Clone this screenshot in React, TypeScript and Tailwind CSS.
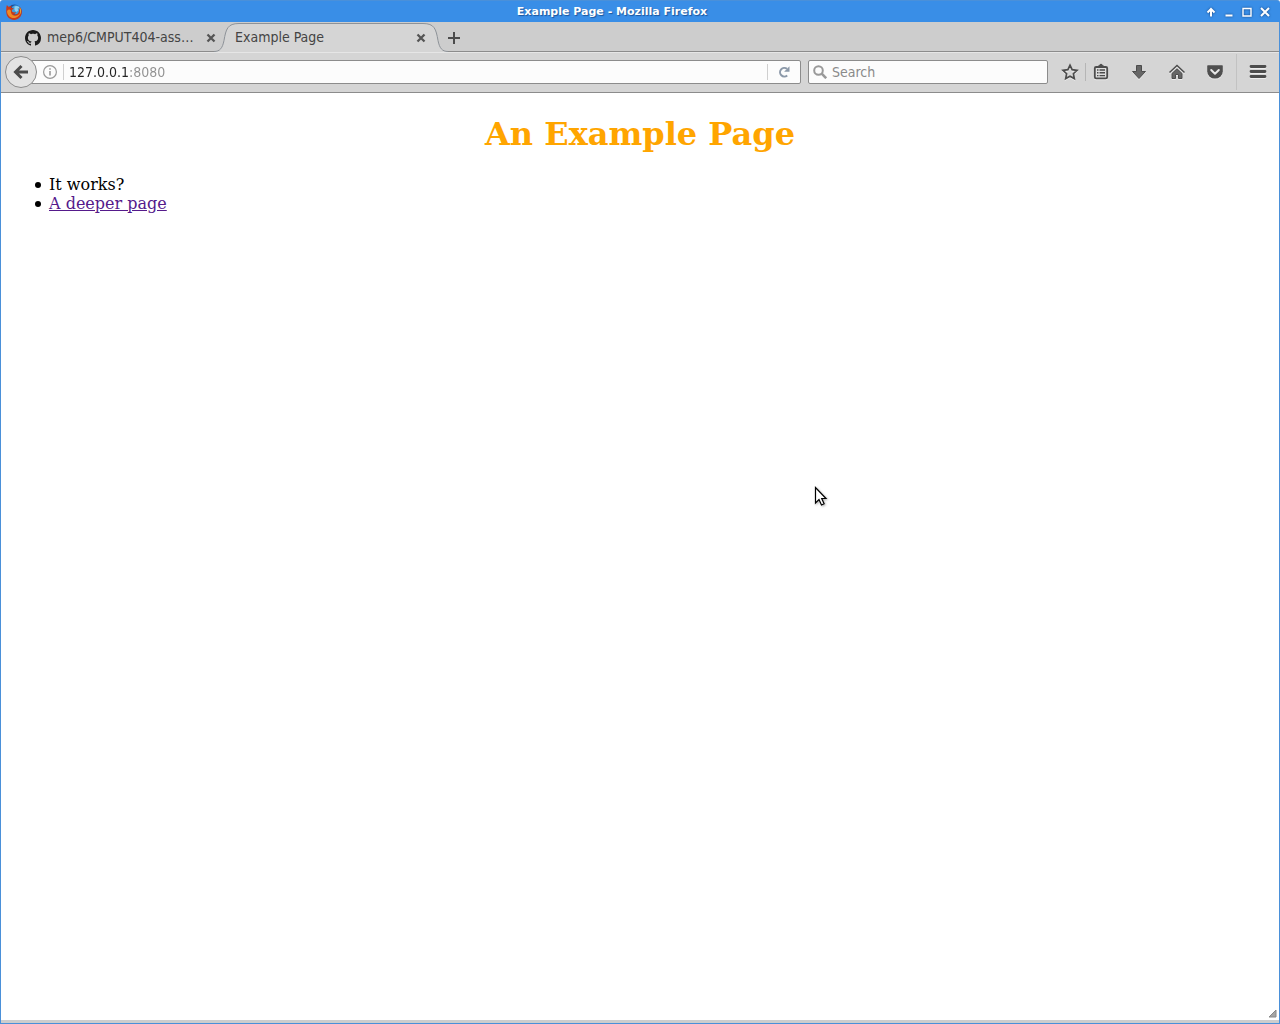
import { useState, type ReactNode } from "react";

function FirefoxLogo() {
  return (
    <svg width="16" height="16" viewBox="0 0 16 16" aria-hidden="true">
      <circle cx="8.4" cy="7.8" r="7.2" fill="#1b4e9b" />
      <circle cx="9.8" cy="5.8" r="4.600" fill="#3f9fdc" />
      <path d="M8.500 2.400c1.600-1 4.200-.600 5.200 1.600-.8-.2-1.600 0-2.200.6l.8 2-2.200 1.400L8.500 6z" fill="#8fd0f0" />
      <path
        d="M.9 1C1.600 2 2.300 2.600 3.200 2.900 4 2.200 5 1.800 6.200 1.700 5.400 2.400 5 3 4.900 3.800c1 .2 1.900.1 2.700.3-.1.900-.9 1.400-1.700 1.800 0 .8 0 1.300.500 1.900 1 1 2.500.500 3.600.400-.400 1.300-1.700 1.800-2.900 1.800 1.700 1.200 4.200.600 5.200-1.200.700-1.400 1-3 .600-4.600.500.500.800 1.100 1 1.700.1-1.200-.1-2.400-.7-3.300 1.600 1.200 2.600 3 2.600 5.100 0 4.700-3.400 8.200-7.700 8.200C3.600 15.900.3 12.600.3 8.300.2 5.800.1 3.400.9 1z"
        fill="#c93a1a"
      />
      <path d="M1 7.500c.4 4 3.300 6.700 6.700 6.600 3.700-.1 6.200-2.500 6.800-5.800-1.200 2.600-3.300 3.700-5.600 3.400C6.200 11.600 4.600 9.500 4.800 6.500 3.600 4.800 1.500 5.200 1 7.500z" fill="#f08a24" />
      <path d="M13.600 3.200c1.500 1.900 1.700 4.900.4 7.200.2-2.300.3-5-.4-7.200z" fill="#f7d33c" />
    </svg>
  );
}

function GithubMark() {
  return (
    <svg width="16" height="16" viewBox="0 0 16 16" fill="#1b1b1b" aria-hidden="true">
      <path d="M8 0C3.580 0 0 3.580 0 8c0 3.540 2.290 6.530 5.470 7.590.4.070.55-.17.55-.38 0-.19-.01-.82-.01-1.490-2.010.37-2.530-.49-2.690-.94-.09-.23-.48-.94-.82-1.130-.28-.15-.68-.52-.01-.53.63-.01 1.080.58 1.230.82.72 1.210 1.870.87 2.330.66.07-.52.28-.87.51-1.070-1.780-.2-3.640-.89-3.640-3.950 0-.87.31-1.590.82-2.150-.08-.2-.36-1.020.08-2.120 0 0 .67-.21 2.200.82.64-.18 1.320-.27 2-.27s1.360.09 2 .27c1.530-1.040 2.200-.82 2.200-.82.44 1.100.16 1.920.08 2.120.51.56.82 1.270.82 2.150 0 3.070-1.870 3.750-3.650 3.950.29.25.54.73.54 1.480 0 1.070-.01 1.930-.01 2.200 0 .21.15.46.55.38A8.010 8.010 0 0 0 16 8c0-4.420-3.580-8-8-8z" />
    </svg>
  );
}

function CloseButton({ label }: { label: string }) {
  return (
    <button type="button" aria-label={label} className="grid size-4 shrink-0 place-items-center">
      <svg width="10" height="10" viewBox="0 0 10 10" stroke="#555" strokeWidth="2.300" aria-hidden="true">
        <path d="M1.500 1.500l7 7M8.500 1.500l-7 7" />
      </svg>
    </button>
  );
}

function WindowButton({ label, children }: { label: string; children: ReactNode }) {
  return (
    <button type="button" aria-label={label} className="grid h-5 w-[18px] place-items-center">
      <svg width="12" height="12" viewBox="0 0 12 12" fill="none" stroke="#fff" strokeWidth="2" className="drop-shadow-[0_0_1px_#15417c]" aria-hidden="true">
        {children}
      </svg>
    </button>
  );
}

function ToolButton({ label, wide = true, children }: { label: string; wide?: boolean; children: ReactNode }) {
  return (
    <button type="button" aria-label={label} className={wide ? "grid h-8 w-[38px] place-items-center" : "grid h-8 w-[30px] place-items-center"}>
      <svg width="18" height="18" viewBox="0 0 18 18" fill="none" aria-hidden="true" className="drop-shadow-[0_1px_0_#ececec]">
        {children}
      </svg>
    </button>
  );
}

function TitleBar() {
  return (
    <header className="flex h-[22px] items-center rounded-t-[3px] border-t border-[#4a90d9] bg-[#398ee7] px-[6px]">
      <FirefoxLogo />
      <div className="flex-1 pt-px text-center text-[11px] leading-5 font-bold text-white [text-shadow:1px_1px_1px_#1b559c]">
        Example Page - Mozilla Firefox
      </div>
      <div className="flex">
        <WindowButton label="Shade">
          <path d="M6 10.500V3M2.500 6.500L6 3l3.500 3.500" />
        </WindowButton>
        <WindowButton label="Minimize">
          <path d="M2.500 9.500h7" />
        </WindowButton>
        <WindowButton label="Maximize">
          <path d="M2 2.500h8v7.500H2z" strokeWidth="1.400" />
        </WindowButton>
        <WindowButton label="Close window">
          <path d="M2 2l8 8M10 2l-8 8" />
        </WindowButton>
      </div>
    </header>
  );
}

function TabStrip() {
  return (
    <div className="flex h-[30px] bg-[#cdcdcd] text-[14px] text-[#444]">
      <div className="flex w-[213px] items-center border-b border-[#8c8c8c] pt-[2px] pl-6">
        <button type="button" className="flex min-w-0 flex-1 items-center gap-[6px]">
          <GithubMark />
          <span className="whitespace-nowrap">mep6/CMPUT404-ass…</span>
        </button>
      </div>
      <div className="relative flex w-[234px] items-center">
        <div className="absolute inset-0 flex">
          <svg width="25" height="30" viewBox="0 0 25 30" fill="none" aria-hidden="true">
            <path d="M0 29.500C6 29.500 8.500 26 10 18.500 12 7 13.500 1.500 25 1.500V30H0z" fill="#d5d5d5" />
            <path d="M0 29.500C6 29.500 8.500 26 10 18.500 12 7 13.500 1.500 25 1.500" stroke="#8d9298" />
          </svg>
          <div className="mt-px flex-1 border-t border-[#8d9298] bg-[#d5d5d5]" />
          <svg width="25" height="30" viewBox="0 0 25 30" fill="none" aria-hidden="true">
            <path d="M25 29.500C19 29.500 16.500 26 15 18.500 13 7 11.500 1.500 0 1.500V30H25z" fill="#d5d5d5" />
            <path d="M25 29.500C19 29.500 16.500 26 15 18.500 13 7 11.500 1.500 0 1.500" stroke="#8d9298" />
          </svg>
        </div>
        <div className="relative flex flex-1 items-center pt-px pr-[19px] pl-[21px]">
          <button type="button" className="flex-1 text-left whitespace-nowrap">
            Example Page
          </button>
          <CloseButton label="Close Example Page" />
        </div>
        <div className="absolute top-2 -left-[11px]">
          <CloseButton label="Close mep6/CMPUT404-assignment" />
        </div>
      </div>
      <div className="flex flex-1 items-center border-b border-[#8c8c8c] pt-[2px]">
        <button type="button" aria-label="New tab" className="-ml-[2px] grid size-4 place-items-center">
          <svg width="14" height="14" viewBox="0 0 14 14" stroke="#4c4c4c" strokeWidth="2" aria-hidden="true">
            <path d="M7 1v12M1 7h12" />
          </svg>
        </button>
      </div>
    </div>
  );
}

function NavBar() {
  const [address, setAddress] = useState("127.0.0.1:8080");
  return (
    <div className="flex h-[41px] items-center border-t border-b border-t-[#e6e6e6] border-b-[#8c8c8c] bg-[#d5d5d5] pr-[2px] pb-[2px] pl-1">
      <button type="button" aria-label="Back" className="relative grid size-8 shrink-0 place-items-center rounded-full border border-[#8c8c8c] bg-[#e3e3e3]">
        <svg width="16" height="16" viewBox="0 0 16 16" fill="none" stroke="#4c4c4c" strokeWidth="3" aria-hidden="true">
          <path d="M15 8H3M8.500 2L2.500 8l6 6" />
        </svg>
      </button>
      <div className="-ml-[6px] flex h-6 flex-1 items-center rounded-r-[2px] border border-[#8c8c8c] bg-[#fcfcfc] pl-[11px]">
        <button type="button" aria-label="Site information">
          <svg width="14" height="14" viewBox="0 0 14 14" fill="none" stroke="#999" aria-hidden="true">
            <circle cx="7" cy="7" r="6.400" strokeWidth="1.200" />
            <path d="M7 6v4.500M7 3.200v1.600" strokeWidth="1.600" />
          </svg>
        </button>
        <div className="ml-[6px] h-4 w-px bg-[#cfcfcf]" />
        <input
          type="text"
          aria-label="Address"
          value={address}
          onChange={(e) => setAddress(e.target.value)}
          className="ml-[5px] min-w-0 flex-1 bg-[linear-gradient(to_right,#222_60px,#8f8f8f_60px)] bg-clip-text text-[14px] leading-5 text-transparent caret-black outline-none"
        />
        <div className="h-4 w-px bg-[#cfcfcf]" />
        <button type="button" aria-label="Reload" className="grid h-5 w-8 place-items-center">
          <svg width="12" height="12" viewBox="0 0 12 12" fill="none" aria-hidden="true">
            <path d="M9.200 9.400A4.300 4.300 0 1 1 9 2.800" stroke="#8b98a8" strokeWidth="2" />
            <path d="M11.500.300v5.400H6.100z" fill="#8b98a8" />
          </svg>
        </button>
      </div>
      <label className="ml-[7px] flex h-6 w-60 items-center rounded-[2px] border border-[#8c8c8c] bg-[#fcfcfc] pl-1">
        <svg width="14" height="14" viewBox="0 0 14 14" fill="none" stroke="#999" strokeWidth="2" aria-hidden="true">
          <circle cx="5.500" cy="5.500" r="4.300" />
          <path d="M8.700 8.700l4.500 4.500" strokeWidth="2.600" />
        </svg>
        <input type="search" aria-label="Search" placeholder="Search" className="ml-[5px] min-w-0 flex-1 text-[14px] leading-5 outline-none placeholder:text-[#8a8a8a]" />
      </label>
      <div className="flex items-center pl-[7px]">
        <ToolButton label="Bookmark this page" wide={false}>
          <path d="M9 2.200l2.100 4.500 4.900.600-3.600 3.400.900 4.900L9 13.200l-4.300 2.400.900-4.900L2 7.300l4.900-.600z" stroke="#4c4c4c" strokeWidth="1.700" />
        </ToolButton>
        <div className="h-[18px] w-px bg-[#b5b5b5]" />
        <ToolButton label="Bookmarks" wide={false}>
          <path d="M6 3.500L9 1l3 2.500z" fill="#4c4c4c" stroke="#4c4c4c" />
          <rect x="2.800" y="4" width="12.400" height="11.400" rx="1.300" fill="#dedede" stroke="#4c4c4c" strokeWidth="1.800" />
          <path d="M5 7h1.500M5 9.800h1.500M5 12.600h1.500M7.500 7H13M7.500 9.800H13M7.500 12.600H13" stroke="#4c4c4c" strokeWidth="1.400" />
        </ToolButton>
        <div className="flex pl-1">
          <ToolButton label="Downloads">
            <path d="M6.500 2.500h5v6H15.500L9 15.500l-6.500-7h4z" fill="#666" stroke="#4c4c4c" />
          </ToolButton>
          <ToolButton label="Home">
            <path d="M1.500 9.500L9 2.500l7.500 7" stroke="#4c4c4c" strokeWidth="1.500" />
            <path d="M4 10.500l5-4.700 5 4.700v5h-3.500v-4h-3v4H4z" fill="#666" stroke="#4c4c4c" />
          </ToolButton>
          <ToolButton label="Save to Pocket">
            <path d="M2 2.200h14q.800 0 .800.800v5.200a7.800 7.400 0 0 1-15.600 0V3q0-.800.800-.800z" fill="#4f4f4f" />
            <path d="M5.200 7l3.800 3.700L12.800 7" stroke="#e8e8e8" strokeWidth="2" strokeLinecap="round" strokeLinejoin="round" />
          </ToolButton>
        </div>
        <div className="ml-[2px] h-9 w-px bg-[#c2c2c2]" />
        <div className="pl-[2px]">
          <ToolButton label="Open menu">
            <path d="M2 3.500h14M2 8.500h14M2 13.500h14" stroke="#4c4c4c" strokeWidth="2.800" strokeLinecap="round" />
          </ToolButton>
        </div>
      </div>
    </div>
  );
}

export default function App() {
  return (
    <div className="relative flex min-h-screen flex-col bg-white font-['DejaVu_Sans',sans-serif]">
      <TitleBar />
      <div className="flex flex-1 flex-col border-x border-b border-[#4a90d9]">
        <div className="font-['DejaVu_Sans_Condensed','DejaVu_Sans',sans-serif]">
          <TabStrip />
          <NavBar />
        </div>
        <main className="relative flex-1 bg-white px-2 pt-[22px] font-['DejaVu_Serif',serif] text-base leading-[19px] text-black">
          <h1 className="mb-[22px] text-center text-[32px] leading-[38px] font-bold text-[#ffa500]">An Example Page</h1>
          <ul className="pl-[26px]">
            <li className="flex items-center before:mt-px before:mr-2 before:size-[6px] before:rounded-full before:bg-black">It works?</li>
            <li className="flex items-center before:mt-px before:mr-2 before:size-[6px] before:rounded-full before:bg-black">
              <a href="#deeper" className="text-[#551a8b] underline">
                A deeper page
              </a>
            </li>
          </ul>
          <svg width="9" height="9" viewBox="0 0 9 9" className="absolute right-[2px] bottom-[2px]" aria-hidden="true">
            <path d="M8 1v7H1z" fill="#a5a5a5" stroke="#888" />
          </svg>
        </main>
        <div className="h-[3px] bg-[#cdcdcd]" />
      </div>
      <svg width="14" height="22" viewBox="0 0 14 22" className="absolute top-[486px] left-[814px] drop-shadow-[1px_1px_1px_rgba(0,0,0,0.3)]" aria-hidden="true">
        <path d="M1.500 1.500v15.500l3.500-3.500 2.500 5.500 2.600-1.200-2.400-5.300H12z" fill="#fff" stroke="#000" strokeWidth="1.200" />
      </svg>
    </div>
  );
}
